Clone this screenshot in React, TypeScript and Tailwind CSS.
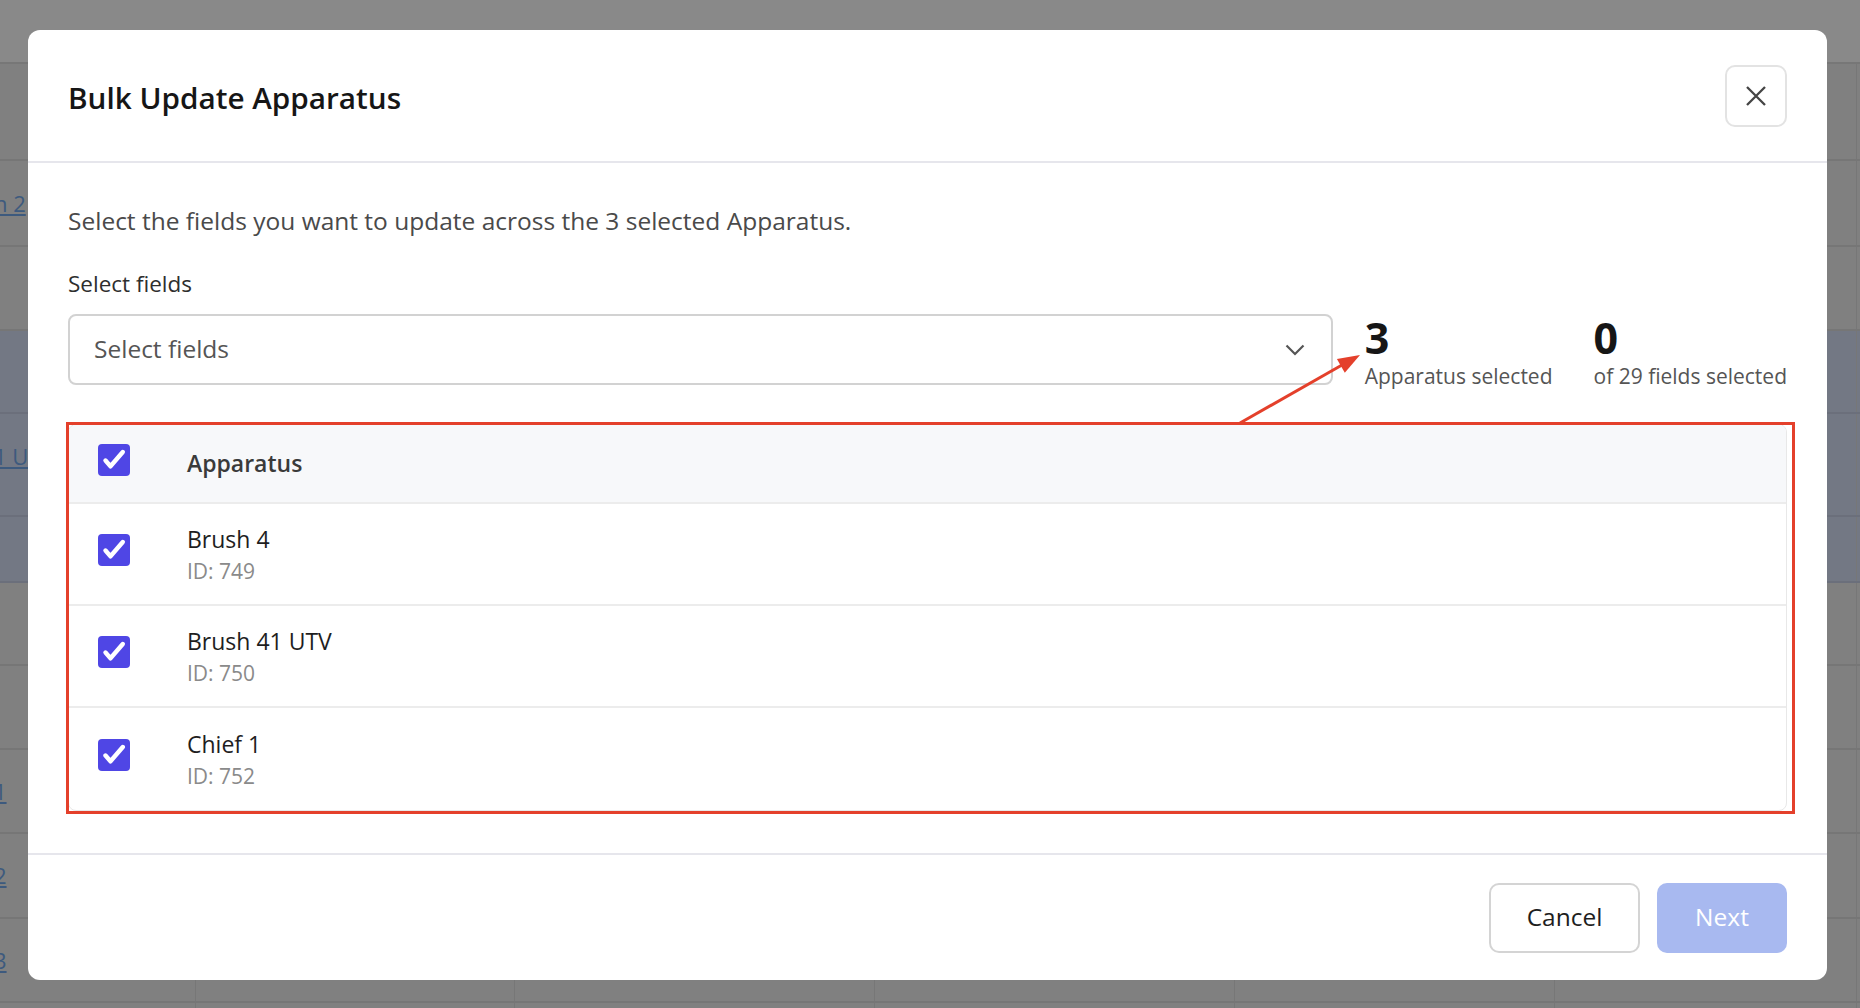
const rows = [
    { name: "Brush 4", id: 749 },
    { name: "Brush 41 UTV", id: 750 },
    { name: "Chief 1", id: 752 },
];

// faded table behind the modal backdrop
const bgRows = [
    { h: "h-[97px]", band: false, link: "" },
    { h: "h-[86px]", band: false, link: "n 2" },
    { h: "h-[84px]", band: false, link: "" },
    { h: "h-[83px]", band: true, link: "" },
    { h: "h-[103px]", band: true, link: "1 U" },
    { h: "h-[66px]", band: true, link: "" },
    { h: "h-[83px]", band: false, link: "" },
    { h: "h-[84px]", band: false, link: "" },
    { h: "h-[84px]", band: false, link: "1" },
    { h: "h-[85px]", band: false, link: "2" },
    { h: "h-[84px]", band: false, link: "3" },
    { h: "h-[20px]", band: false, link: "" },
];

const Checkbox = () => (
    <div className="mb-[8px] flex h-[32px] w-[32px] shrink-0 items-center justify-center rounded-[4px] bg-[#4f46e5]">
        <svg viewBox="0 0 32 32" className="h-[32px] w-[32px]" fill="none">
            <path d="M7.5 16.5l5 5.8L24.8 8" stroke="white" strokeWidth="4.4" strokeLinecap="round" strokeLinejoin="round" />
        </svg>
    </div>
);

const Background = () => (
    <div className="flex h-full w-full flex-col bg-[#808080]">
        <div className="h-[64px] shrink-0 border-b-2 border-[#777] bg-[#898989]" />
        {bgRows.map((r, i) => (
            <div
                key={i}
                className={`${r.h} flex shrink-0 border-b-2 ${r.band ? "border-[#6b6f7b] bg-[#737884]" : "border-[#767676]"}`}
            >
                <div className={`flex w-[196px] border-r border-[#777] ${r.link === "1 U" ? "items-start pt-[26px]" : "items-center"}`}>
                    <span className="-ml-[6px] text-[22px] text-[#3d5a7e] underline">{r.link}</span>
                </div>
                <div className="w-[319px] border-r border-[#777]" />
                <div className="w-[360px] border-r border-[#777]" />
                <div className="w-[360px] border-r border-[#777]" />
                <div className="w-[320px] border-r border-[#777]" />
                <div className="w-[302px] border-r border-[#777]" />
                <div className="flex-1" />
            </div>
        ))}
    </div>
);

export default function App() {
    return (
        <div className="relative h-[1008px] w-[1860px] overflow-hidden font-['Open_Sans',sans-serif]">
            <Background />

            <div className="absolute left-[28px] top-[30px] flex h-[950px] w-[1799px] flex-col rounded-[12px] bg-white">
                {/* header */}
                <div className="flex h-[133px] shrink-0 items-center justify-between border-b-2 border-[#e6e6ec] px-[40px]">
                    <h1 className="pt-[4px] text-[29.7px] font-semibold leading-[40px] text-[#161616]">Bulk Update Apparatus</h1>
                    <button
                        type="button"
                        className="flex h-[62px] w-[62px] items-center justify-center rounded-[10px] border-2 border-[#e3e3e3]"
                    >
                        <svg viewBox="0 0 20 20" className="h-[20px] w-[20px]" fill="none">
                            <path d="M1 1l18 18M19 1L1 19" stroke="#444" strokeWidth="2.3" />
                        </svg>
                    </button>
                </div>

                {/* body */}
                <div className="flex flex-1 flex-col px-[40px] pt-[41px]">
                    <p className="text-[24.5px] leading-[33px] text-[#4a4a4a]">
                        Select the fields you want to update across the 3 selected Apparatus.
                    </p>
                    <label className="mt-[32px] text-[22.5px] leading-[30px] text-[#2e2e2e]">Select fields</label>

                    <div className="mt-[15px] flex items-start">
                        <div className="flex h-[71px] flex-1 items-center justify-between rounded-[8px] border-2 border-[#d2d2d2] pl-[24px] pr-[26px]">
                            <span className="text-[24.5px] text-[#555]">Select fields</span>
                            <svg viewBox="0 0 20 12" className="h-[12px] w-[20px]" fill="none">
                                <path d="M1.5 1.5l8.5 8.5 8.5-8.5" stroke="#555" strokeWidth="2.2" />
                            </svg>
                        </div>
                        <div className="ml-[32px] flex gap-[41px]">
                            <div className="flex flex-col">
                                <span className="pt-[2px] text-[43px] font-bold leading-none text-[#161616]">3</span>
                                <span className="mt-[3px] text-[21px] leading-[28px] text-[#555]">Apparatus selected</span>
                            </div>
                            <div className="flex flex-col">
                                <span className="pt-[2px] text-[43px] font-bold leading-none text-[#161616]">0</span>
                                <span className="mt-[3px] text-[21px] leading-[28px] text-[#555]">of 29 fields selected</span>
                            </div>
                        </div>
                    </div>

                    {/* table */}
                    <div className="relative mt-[34px]">
                        <div className="overflow-hidden rounded-[8px] border border-[#e8e8e8]">
                            <div className="flex h-[79px] items-center border-b-2 border-[#ececec] bg-[#f7f8fa] pl-[29px]">
                                <Checkbox />
                                <span className="ml-[57px] text-[23px] font-semibold text-[#3a3a3a]">Apparatus</span>
                            </div>
                            {rows.map((r, i) => (
                                <div
                                    key={r.id}
                                    className={`flex h-[102px] items-center pl-[29px] ${i < rows.length - 1 ? "border-b-2 border-[#ececec]" : ""}`}
                                >
                                    <Checkbox />
                                    <div className="ml-[57px] flex flex-col">
                                        <span className="text-[23px] leading-[34px] text-[#1e1e1e]">{r.name}</span>
                                        <span className="text-[21px] leading-[30px] text-[#8a8a8a]">ID: {r.id}</span>
                                    </div>
                                </div>
                            ))}
                        </div>
                        {/* annotation frame */}
                        <div className="pointer-events-none absolute -bottom-[3px] -left-[2px] -right-[8px] -top-[2px] border-[3px] border-[#e4402b]" />
                    </div>
                </div>

                {/* footer */}
                <div className="flex h-[127px] shrink-0 items-center justify-end gap-[17px] border-t-2 border-[#e6e6ec] px-[40px]">
                    <button
                        type="button"
                        className="h-[70px] w-[151px] rounded-[10px] border-2 border-[#d4d4d4] text-[24.5px] text-[#1e1e1e]"
                    >
                        Cancel
                    </button>
                    <button type="button" className="h-[70px] w-[130px] rounded-[10px] bg-[#a8b9f0] text-[24.5px] text-white">
                        Next
                    </button>
                </div>
            </div>

            {/* annotation arrow */}
            <svg className="pointer-events-none absolute left-[1235px] top-[345px] h-[85px] w-[135px]" viewBox="0 0 135 85">
                <line x1="5" y1="78" x2="107" y2="20" stroke="#e4402b" strokeWidth="3" />
                <polygon points="125,10 109.8,27.8 101.9,13.9" fill="#e4402b" />
            </svg>
        </div>
    );
}
